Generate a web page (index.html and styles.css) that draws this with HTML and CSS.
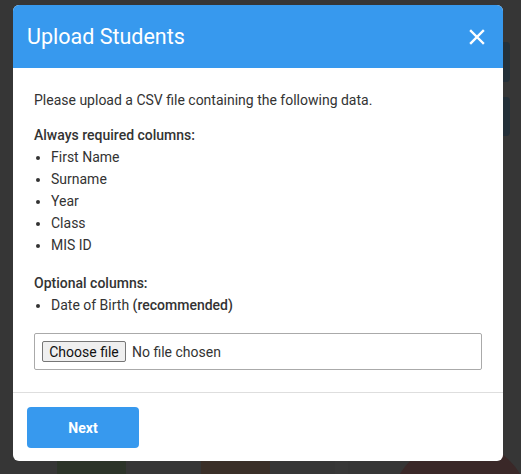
FILE: index.html
```html
<!DOCTYPE html>
<html>
<head>
<meta charset="utf-8">
<link rel="stylesheet" href="styles.css">
</head>
<body>
<div class="backdrop">
  <div class="bg-card bg-card-1"></div>
  <div class="bg-card bg-card-2"></div>
  <div class="bg-tile bg-green"></div>
  <div class="bg-tile bg-brown"></div>
  <div class="bg-tile bg-gray"></div>
  <div class="bg-circle"></div>
</div>
<div class="stage">
  <div class="modal">
    <div class="modal-header">
      <h1 class="modal-title">Upload Students</h1>
      <svg class="close" width="16" height="16" viewBox="0 0 16 16"><path d="M2 2L14 14M14 2L2 14" stroke="#fff" stroke-width="2.4" stroke-linecap="square"/></svg>
    </div>
    <div class="modal-body">
      <p class="intro">Please upload a CSV file containing the following data.</p>
      <p class="heading">Always required columns:</p>
      <ul class="cols">
        <li>First Name</li>
        <li>Surname</li>
        <li>Year</li>
        <li>Class</li>
        <li>MIS ID</li>
      </ul>
      <p class="heading">Optional columns:</p>
      <ul class="cols cols-last">
        <li>Date of Birth <b>(recommended)</b></li>
      </ul>
      <label class="file-box">
        <input type="file" class="file-input">
        <span class="file-btn">Choose file</span>
        <span class="file-name">No file chosen</span>
      </label>
    </div>
    <div class="modal-footer">
      <button class="btn-next">Next</button>
    </div>
  </div>
</div>
</body>
</html>
```

FILE: styles.css
```css
html, body {
  margin: 0;
  padding: 0;
}
body {
  background: #363636;
  font-family: Roboto, "Liberation Sans", sans-serif;
  width: 521px;
  height: 474px;
  overflow: hidden;
  position: relative;
}
.backdrop {
  position: absolute;
  inset: 0;
  overflow: hidden;
}
.bg-card {
  position: absolute;
  left: 496px;
  width: 14px;
  background: #243039;
  border-radius: 4px;
}
.bg-card-1 { top: 42px; height: 40px; }
.bg-card-2 { top: 97px; height: 39px; }
.bg-tile {
  position: absolute;
  top: 455px;
  height: 19px;
}
.bg-green { left: 57px; width: 69px; background: #2c3429; }
.bg-brown { left: 201px; width: 69px; background: #3a2f28; }
.bg-gray { left: 335px; width: 13px; background: #383838; }
.bg-circle {
  position: absolute;
  left: 390px;
  top: 440px;
  width: 140px;
  height: 140px;
  border-radius: 50%;
  background: #3a2828;
}
.stage {
  position: relative;
  padding: 5px 0 0 13px;
}
.modal {
  width: 490px;
  background: #fff;
  border-radius: 6px;
  overflow: hidden;
}
.modal-header {
  height: 63px;
  background: #3799ee;
  display: flex;
  align-items: center;
  justify-content: space-between;
  padding: 0 18px 0 14px;
}
.modal-title {
  margin: 0;
  font-size: 21.5px;
  font-weight: 400;
  color: #fff;
  line-height: 1;
}
.close {
  display: block;
}
.modal-body {
  padding: 21px 21px 22px;
  border-bottom: 1px solid #dedede;
  color: #333;
  font-size: 14px;
  line-height: 22px;
}
.intro {
  margin: 0 0 13px;
}
.heading {
  margin: 0;
  font-weight: 500;
}
.cols {
  margin: 0 0 16px;
  padding-left: 17px;
}
.cols-last {
  margin-bottom: 17px;
}
.cols b {
  font-weight: 500;
}
.file-box {
  height: 35px;
  border: 1px solid #aaa;
  border-radius: 2px;
  display: flex;
  align-items: center;
  padding: 0 7px;
  font-size: 14px;
}
.file-input {
  display: none;
}
.file-btn {
  box-sizing: border-box;
  height: 21px;
  width: 84px;
  display: flex;
  align-items: center;
  justify-content: center;
  color: #111;
  background: #efefef;
  border: 1px solid #767676;
  border-radius: 2px;
  margin-right: 6px;
  line-height: 1;
}
.file-name {
  color: #333;
}
.modal-footer {
  padding: 14px 14px 13px;
}
.btn-next {
  width: 112px;
  height: 41px;
  background: #3799ee;
  border: none;
  border-radius: 4px;
  color: #fff;
  font-family: Roboto, "Liberation Sans", sans-serif;
  font-size: 14px;
  font-weight: 700;
  display: block;
}
```
